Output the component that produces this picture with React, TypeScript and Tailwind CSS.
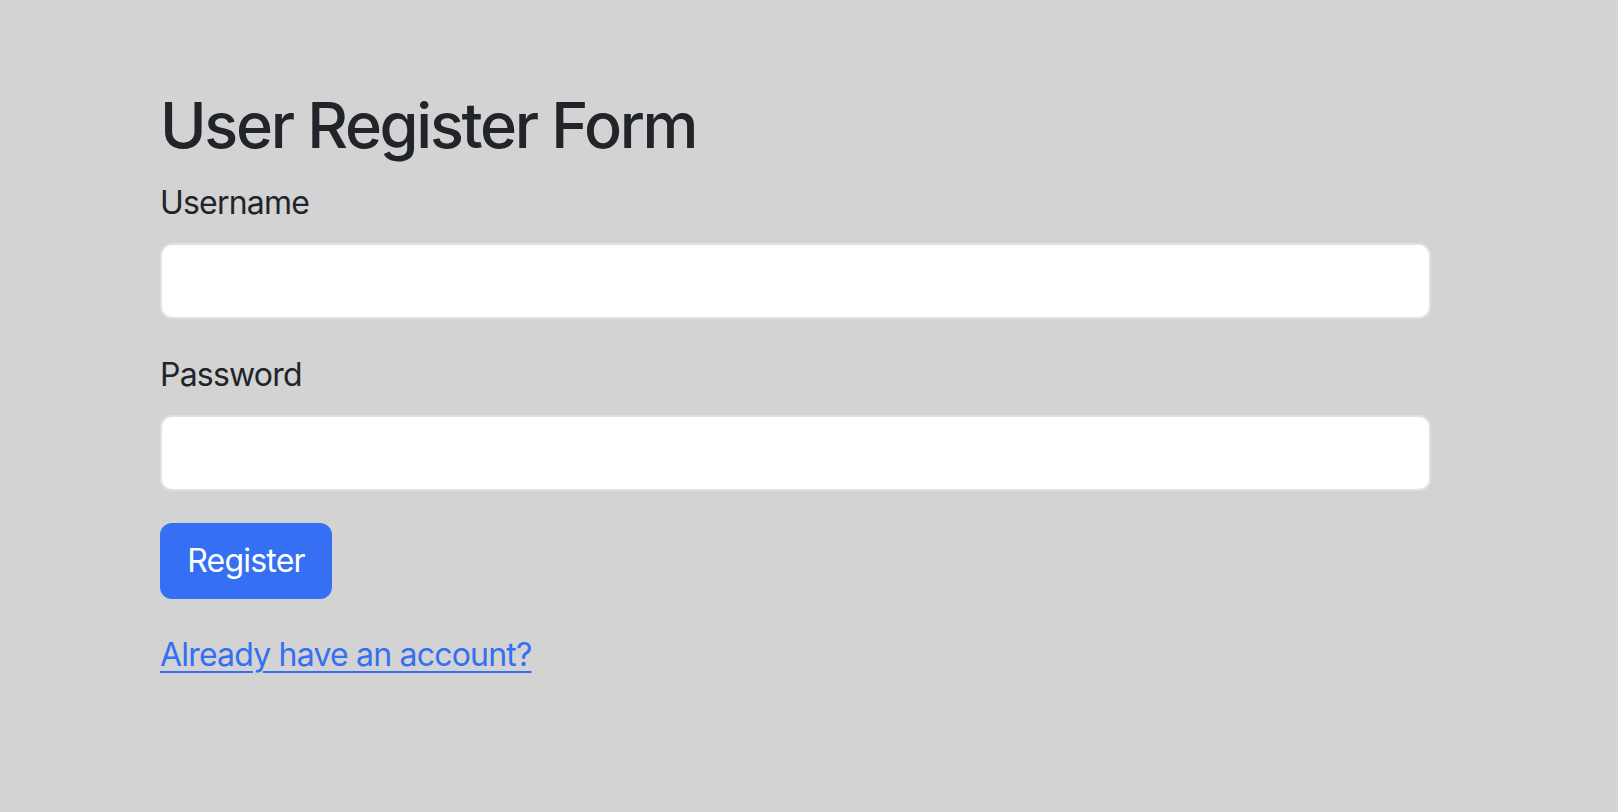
import { FormEvent, useState } from "react";

function App() {
  const [username, setUsername] = useState("");
  const [password, setPassword] = useState("");

  const submitHandler = (event: FormEvent<HTMLFormElement>) => {
    event.preventDefault();
  };

  return (
    <main
      className="min-h-[812px] w-full bg-[#d3d3d3] pt-[87px] text-[#212529] tracking-[-0.8px]"
      style={{ fontFamily: "Inter, 'Noto Sans', sans-serif" }}
    >
      <div className="ml-[160px] w-[1271px]">
        <h1 className="mb-4 text-[63px] leading-[76px] font-medium tracking-[-2.3px]">
          User Register Form
        </h1>

        <form onSubmit={submitHandler}>
          <div className="mb-8">
            <label htmlFor="username" className="mb-4 block text-[32px] leading-[48px]">
              Username
            </label>
            <input
              id="username"
              type="text"
              value={username}
              onChange={(e) => setUsername(e.target.value)}
              className="block h-[76px] w-full rounded-[12px] border-2 border-[#dee2e6] bg-white px-6 text-[32px] outline-none"
            />
          </div>

          <div className="mb-8">
            <label htmlFor="password" className="mb-4 block text-[32px] leading-[48px]">
              Password
            </label>
            <input
              id="password"
              type="password"
              value={password}
              onChange={(e) => setPassword(e.target.value)}
              className="block h-[76px] w-full rounded-[12px] border-2 border-[#dee2e6] bg-white px-6 text-[32px] outline-none"
            />
          </div>

          <button
            type="submit"
            className="h-[76px] w-[172px] rounded-[12px] bg-[#346ff4] text-[32px] leading-[48px] text-white"
          >
            Register
          </button>
        </form>

        <p className="mt-8 text-[32px] leading-[48px]">
          <a
            href="#"
            className="text-[#346ff4] underline decoration-2 underline-offset-[5px]"
          >
            Already have an account?
          </a>
        </p>
      </div>
    </main>
  );
}

export default App;
